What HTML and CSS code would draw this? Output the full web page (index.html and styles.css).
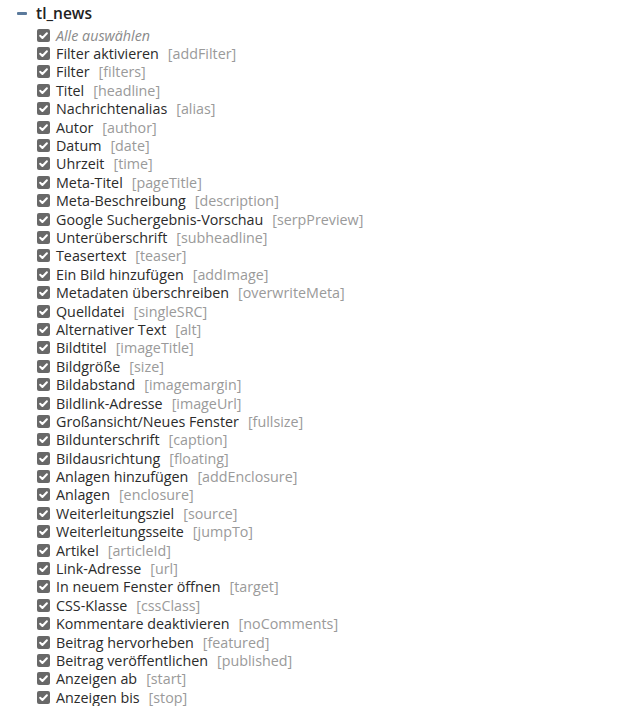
FILE: index.html
```html
<!DOCTYPE html>
<html lang="de">
<head>
<meta charset="utf-8">
<link rel="stylesheet" href="styles.css">
</head>
<body>
<div class="tree">
  <div class="group">
    <span class="toggle"></span>
    <span class="group-name">tl_news</span>
  </div>
  <ul class="fields">
    <li class="all"><span class="cb"><svg viewBox="0 0 13 13"><path d="M3.2 6.8 L5.4 9 L9.9 4.2"/></svg></span><span class="label">Alle auswählen</span></li>
  </ul>
</div>
<script src="app.js"></script>
</body>
</html>
```
FILE: app.js
```js
const items = [
["Filter aktivieren","addFilter"],["Filter","filters"],["Titel","headline"],["Nachrichtenalias","alias"],
["Autor","author"],["Datum","date"],["Uhrzeit","time"],["Meta-Titel","pageTitle"],["Meta-Beschreibung","description"],
["Google Suchergebnis-Vorschau","serpPreview"],["Unterüberschrift","subheadline"],["Teasertext","teaser"],
["Ein Bild hinzufügen","addImage"],["Metadaten überschreiben","overwriteMeta"],["Quelldatei","singleSRC"],
["Alternativer Text","alt"],["Bildtitel","imageTitle"],["Bildgröße","size"],["Bildabstand","imagemargin"],
["Bildlink-Adresse","imageUrl"],["Großansicht/Neues Fenster","fullsize"],["Bildunterschrift","caption"],
["Bildausrichtung","floating"],["Anlagen hinzufügen","addEnclosure"],["Anlagen","enclosure"],
["Weiterleitungsziel","source"],["Weiterleitungsseite","jumpTo"],["Artikel","articleId"],["Link-Adresse","url"],
["In neuem Fenster öffnen","target"],["CSS-Klasse","cssClass"],["Kommentare deaktivieren","noComments"],
["Beitrag hervorheben","featured"],["Beitrag veröffentlichen","published"],["Anzeigen ab","start"],["Anzeigen bis","stop"]
];
const ul = document.querySelector('.fields');
for (const [l, k] of items) {
  const li = document.createElement('li');
  li.innerHTML = '<span class="cb"><svg viewBox="0 0 13 13"><path d="M3.2 6.8 L5.4 9 L9.9 4.2"/></svg></span><span class="label"></span><span class="key"></span>';
  li.querySelector('.label').textContent = l;
  li.querySelector('.key').textContent = '[' + k + ']';
  ul.appendChild(li);
}
```
FILE: styles.css
```css
html, body { margin: 0; padding: 0; background: #fff; }
body { font-family: "Open Sans", "Noto Sans", sans-serif; color: #222; }
.tree { padding: 4px 0 0 17px; }
.group { display: flex; align-items: center; height: 18px; }
.toggle { width: 10px; height: 3px; background: #5b7a9c; border-radius: 1px; margin-right: 9px; }
.group-name { font-size: 15.5px; font-weight: 600; color: #222; }
.fields { list-style: none; margin: 4px 0 0 20px; padding: 0; }
.fields li { display: flex; align-items: center; height: 18.4px; font-size: 14.3px; white-space: nowrap; }
.cb { width: 13px; height: 13px; border-radius: 2px; background: #686868; margin-right: 6px; display: flex; flex: none; }
.cb svg { width: 13px; height: 13px; fill: none; stroke: #fff; stroke-width: 2; stroke-linecap: round; stroke-linejoin: round; }
.label { color: #2b2b2b; }
.all .label { font-style: italic; color: #8a8a8a; }
.key { color: #9a9a9a; margin-left: 9px; }
```
